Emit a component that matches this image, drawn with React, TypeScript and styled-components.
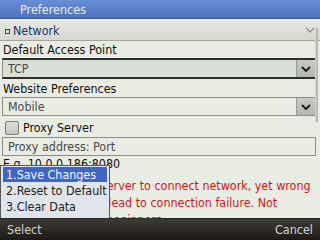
import React from "react"
import styled, { createGlobalStyle } from "styled-components"

const FONT = `"DejaVu Sans Condensed", "DejaVu Sans", "Liberation Sans", sans-serif`

const GlobalStyle = createGlobalStyle`
    html, body {
        margin: 0;
        padding: 0;
        width: 320px;
        height: 240px;
        overflow: hidden;
        background: #e9ece2;
    }
`

const Screen = styled.div`
    position: relative;
    width: 320px;
    height: 240px;
    display: flex;
    flex-direction: column;
    font-family: ${FONT};
    font-stretch: condensed;
    font-size: 12.4px;
    background: #e9ece2;
    overflow: hidden;
`

const TitleBar = styled.div`
    height: 18px;
    flex: none;
    display: flex;
    align-items: center;
    padding-left: 20px;
    color: #e8eefa;
    font-size: 12.5px;
    background: linear-gradient(#6a8ed6, #4e71bc);
    border-bottom: 1px solid #3c5692;
`

const GroupHeader = styled.div`
    height: 20px;
    flex: none;
    display: flex;
    align-items: center;
    justify-content: space-between;
    padding: 0 5px 0 5px;
    color: #24345e;
    background: linear-gradient(#e8e8e2, #d6d7d0);
    border-top: 1px solid #f4f4f0;
    border-bottom: 1px solid #a3a59c;
`

const Bullet = styled.span`
    display: inline-block;
    width: 3px;
    height: 3px;
    margin-right: 3px;
    border: 1px solid #33436a;
    vertical-align: middle;
`

const Content = styled.div`
    flex: 1;
    display: flex;
    flex-direction: column;
    padding: 0 4px 0 3px;
    overflow: hidden;
`

const Label = styled.div<{ $top?: number }>`
    height: 15px;
    line-height: 15px;
    margin-top: ${p => p.$top ?? 0}px;
    margin-bottom: 1px;
    color: #111;
    white-space: nowrap;
`

const Field = styled.div<{ $focused?: boolean; $h: number }>`
    height: ${p => p.$h}px;
    flex: none;
    box-sizing: border-box;
    display: flex;
    align-items: stretch;
    color: #4a4a48;
    background: ${p => (p.$focused ? "#d9e1d7" : "#e9ece2")};
    border: 1px solid #8c8d84;
    border-top: ${p => (p.$focused ? "2px solid #2f2f2c" : "1px solid #8c8d84")};
    border-bottom: ${p => (p.$focused ? "2px solid #2f2f2c" : "1px solid #8c8d84")};
    margin-left: -1px;
`

const FieldText = styled.div`
    flex: 1;
    display: flex;
    align-items: center;
    padding-left: 5px;
    white-space: nowrap;
`

const DropButton = styled.div`
    width: 18px;
    display: flex;
    align-items: center;
    justify-content: center;
    background: linear-gradient(#c9c9c4, #b6b6b0);
    border-left: 1px solid #9a9a94;
`

const CheckRow = styled.div`
    height: 19px;
    flex: none;
    margin-top: 2px;
    display: flex;
    align-items: center;
    color: #111;
`

const CheckBox = styled.span`
    width: 12px;
    height: 12px;
    margin: 0 4px 0 2px;
    border: 1px solid #7c7c78;
    border-radius: 2px;
    background: linear-gradient(#dcdcd8, #c6c6c2);
`

const Hint = styled.div`
    height: 16px;
    flex: none;
    line-height: 16px;
    color: #111;
    white-space: nowrap;
`

const Warning = styled.div`
    color: #d4141a;
    line-height: 17px;
    margin-top: 5px;
`

const Scrollbar = styled.div`
    position: absolute;
    right: 2px;
    top: 28px;
    width: 2px;
    height: 94px;
    background: #b8bab2;
    border-left: 1px solid #d6d8d0;
`

const SoftkeyBar = styled.div`
    height: 21px;
    flex: none;
    display: flex;
    align-items: center;
    justify-content: space-between;
    padding: 0 7px;
    color: #d4d4d2;
    font-size: 12.5px;
    background: linear-gradient(#3e3a36, #1c1916);
    border-top: 1px solid #2a2724;
    position: relative;
    z-index: 1;
`

const Menu = styled.div`
    position: absolute;
    left: 0;
    bottom: 21px;
    width: 110px;
    height: 54px;
    box-sizing: border-box;
    padding: 1px 2px 0 2px;
    background: #dfe5ea;
    border: 1px solid #55585c;
    border-bottom: none;
    display: flex;
    flex-direction: column;
`

const MenuItem = styled.div<{ $active?: boolean }>`
    height: 15px;
    line-height: 15px;
    padding-left: 3px;
    margin-bottom: 1px;
    color: ${p => (p.$active ? "#f4f7ff" : "#222")};
    background: ${p => (p.$active ? "#3f66c4" : "transparent")};
    white-space: nowrap;
`

const Chevron = ({ color, weight }: { color: string; weight: number }) => (
    <svg width="10" height="6" viewBox="0 0 10 6">
        <polyline points="1,1 5,5 9,1" fill="none" stroke={color} strokeWidth={weight} />
    </svg>
)

const App = () => {
    return (
        <Screen>
            <GlobalStyle />
            <TitleBar>Preferences</TitleBar>
            <GroupHeader>
                <span><Bullet />Network</span>
                <Chevron color="#8e9096" weight={1.3} />
            </GroupHeader>
            <Content>
                <Label $top={1}>Default Access Point</Label>
                <Field $focused $h={21}>
                    <FieldText>TCP</FieldText>
                    <DropButton><Chevron color="#1e1e1e" weight={2} /></DropButton>
                </Field>
                <Label $top={2}>Website Preferences</Label>
                <Field $h={19}>
                    <FieldText>Mobile</FieldText>
                    <DropButton><Chevron color="#1e1e1e" weight={2} /></DropButton>
                </Field>
                <CheckRow>
                    <CheckBox />
                    Proxy Server
                </CheckRow>
                <Field $h={19}>
                    <FieldText>Proxy address: Port</FieldText>
                </Field>
                <Hint>E.g. 10.0.0.186:8080</Hint>
                <Warning>
                    Enable the proxy server to connect network, yet wrong configuration may lead to connection failure. Not recommended for beginners.
                </Warning>
            </Content>
            <Scrollbar />
            <SoftkeyBar>
                <span>Select</span>
                <span>Cancel</span>
            </SoftkeyBar>
            <Menu>
                <MenuItem $active>1.Save Changes</MenuItem>
                <MenuItem>2.Reset to Default</MenuItem>
                <MenuItem>3.Clear Data</MenuItem>
            </Menu>
        </Screen>
    )
}

export default App
